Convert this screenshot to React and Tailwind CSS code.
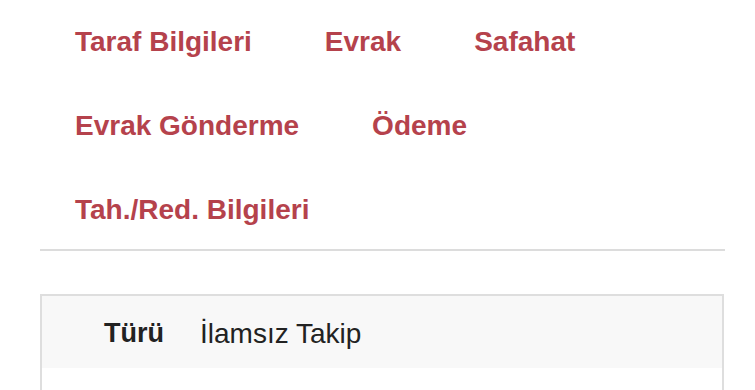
const tabs = [
  ["Taraf Bilgileri", "Evrak", "Safahat"],
  ["Evrak Gönderme", "Ödeme"],
  ["Tah./Red. Bilgileri"],
];

export default function App() {
  return (
    <div className="w-[755px] h-[390px] overflow-hidden bg-white font-['Liberation_Sans',Arial,sans-serif]">
      <div className="pl-[75px] pt-[22px] flex flex-col">
        {tabs.map((row, i) => (
          <div key={i} className="flex gap-x-[73px] h-[84px]">
            {row.map((t) => (
              <span key={t} className="text-[28px] leading-[40px] font-bold text-[#b5424c]">
                {t}
              </span>
            ))}
          </div>
        ))}
      </div>
      <div className="ml-[40px] mr-[30px] mt-[-25px] border-t-2 border-[#dcdcdc]" />
      <div className="ml-[40px] mr-[31px] mt-[43px] border-2 border-[#dedede] h-[120px]">
        <div className="bg-[#f8f8f8] h-[72px] pt-[3px] flex items-center">
          <span className="pl-[62px] w-[158px] text-[27px] font-bold text-[#222]">Türü</span>
          <span className="text-[28px] text-[#222]">İlamsız Takip</span>
        </div>
      </div>
    </div>
  );
}
